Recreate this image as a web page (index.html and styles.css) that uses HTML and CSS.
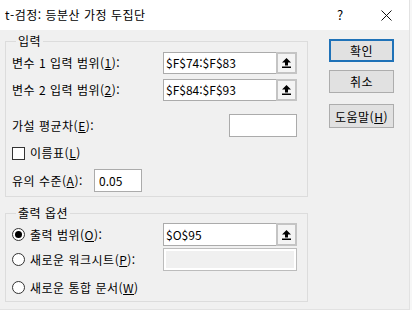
FILE: index.html
```html
<!DOCTYPE html>
<html lang="ko">
<head>
  <meta charset="utf-8" />
  <meta name="viewport" content="width=device-width, initial-scale=1" />
  <title>t-검정: 등분산 가정 두집단</title>

  <link rel="stylesheet" href="styles.css">
</head>

<body>
  <div class="dialog">
    <div class="titlebar">
      <span class="title">t-검정: 등분산 가정 두집단</span>
      <span class="tb-btn">?</span>
      <span class="tb-btn">
        <svg width="11" height="11" viewBox="0 0 11 11">
          <path d="M0.5 0.5 L10.5 10.5 M10.5 0.5 L0.5 10.5" stroke="#111" stroke-width="1" fill="none" />
        </svg>
      </span>
    </div>

    <div class="body">
      <div class="main">
        <fieldset class="group group-input">
          <legend>입력</legend>

          <div class="row row-ref">
            <span class="label">변수 1 입력 범위(<u>1</u>):</span>
            <div class="ref">
              <span class="ref-text">$F$74:$F$83</span>
              <span class="ref-btn">
                <svg width="9" height="10" viewBox="0 0 9 10">
                  <path d="M4.5 0 L9 4.5 L6 4.5 L6 7.5 L3 7.5 L3 4.5 L0 4.5 Z" fill="#000" />
                  <rect x="0" y="8.5" width="9" height="1.5" fill="#000" />
                </svg>
              </span>
            </div>
          </div>

          <div class="row row-ref row-2">
            <span class="label">변수 2 입력 범위(<u>2</u>):</span>
            <div class="ref">
              <span class="ref-text">$F$84:$F$93</span>
              <span class="ref-btn">
                <svg width="9" height="10" viewBox="0 0 9 10">
                  <path d="M4.5 0 L9 4.5 L6 4.5 L6 7.5 L3 7.5 L3 4.5 L0 4.5 Z" fill="#000" />
                  <rect x="0" y="8.5" width="9" height="1.5" fill="#000" />
                </svg>
              </span>
            </div>
          </div>

          <div class="row row-diff">
            <span class="label">가설 평균차(<u>E</u>):</span>
            <span class="textbox diff-box"></span>
          </div>

          <div class="row row-check">
            <span class="checkbox"></span>
            <span class="label">이름표(<u>L</u>)</span>
          </div>

          <div class="row row-alpha">
            <span class="label alpha-label">유의 수준(<u>A</u>):</span>
            <span class="textbox alpha-box">0.05</span>
          </div>
        </fieldset>

        <fieldset class="group group-output">
          <legend>출력 옵션</legend>

          <div class="row row-out">
            <span class="radio checked"></span>
            <span class="label">출력 범위(<u>O</u>):</span>
            <div class="ref">
              <span class="ref-text">$O$95</span>
              <span class="ref-btn">
                <svg width="9" height="10" viewBox="0 0 9 10">
                  <path d="M4.5 0 L9 4.5 L6 4.5 L6 7.5 L3 7.5 L3 4.5 L0 4.5 Z" fill="#000" />
                  <rect x="0" y="8.5" width="9" height="1.5" fill="#000" />
                </svg>
              </span>
            </div>
          </div>

          <div class="row row-out row-sheet">
            <span class="radio"></span>
            <span class="label">새로운 워크시트(<u>P</u>):</span>
            <span class="disabled-box"><span class="disabled-fill"></span></span>
          </div>

          <div class="row row-out row-book">
            <span class="radio"></span>
            <span class="label">새로운 통합 문서(<u>W</u>)</span>
          </div>
        </fieldset>
      </div>

      <div class="buttons">
        <button class="btn btn-default">확인</button>
        <button class="btn btn-cancel">취소</button>
        <button class="btn btn-help">도움말(<u>H</u>)</button>
      </div>
    </div>
  </div>

  <div class="sheet"></div>
</body>
</html>
```

FILE: styles.css
```css
body {
  margin: 0;
  padding: 0;
  width: 412px;
  height: 314px;
  overflow: hidden;
  background-color: #f7f7f7;
  font-family: "Noto Sans CJK KR", "Noto Sans", sans-serif;
  font-size: 12px;
  line-height: 14px;
  color: #000;
}

.dialog {
  width: 410px;
  height: 310px;
  background: #f0f0f0;
  border-right: 1px solid #e2e2e2;
  border-bottom: 1px solid #e2e2e2;
  box-sizing: border-box;
}

.titlebar {
  height: 30px;
  background: #fff;
  display: flex;
  align-items: center;
}

.title {
  flex: 1;
  padding-left: 5px;
  letter-spacing: 0.5px;
}

.tb-btn {
  width: 46px;
  height: 30px;
  display: flex;
  align-items: center;
  justify-content: center;
  font-size: 13px;
}

.body {
  display: flex;
  padding-left: 5px;
}

.main {
  width: 303px;
  padding-top: 4px;
}

.group {
  margin: 0;
  padding: 0 10px 0 6px;
  border: 1px solid #dcdcdc;
  min-inline-size: 0;
}

.group legend {
  margin-left: 4px;
  padding: 0 2px;
  line-height: 14px;
  letter-spacing: 0.5px;
}

.group-input {
  padding-top: 4px;
  padding-bottom: 4px;
}

.group-output {
  margin-top: 9px;
  padding-top: 3px;
  padding-bottom: 2px;
}

.row {
  display: flex;
  align-items: center;
}

.label {
  letter-spacing: 0.5px;
}

.row-ref {
  height: 22px;
  justify-content: space-between;
}

.row-2 {
  margin-top: 5px;
}

.row-diff {
  height: 23px;
  margin-top: 13px;
  justify-content: space-between;
}

.row-check {
  height: 14px;
  margin-top: 9px;
}

.row-alpha {
  height: 23px;
  margin-top: 9px;
}

.alpha-label {
  width: 82px;
}

u {
  text-decoration: underline;
  text-underline-offset: 1px;
}

.ref {
  width: 134px;
  height: 100%;
  display: flex;
  box-sizing: border-box;
}

.ref-text {
  flex: 1;
  background: #fff;
  border: 1px solid #ababab;
  border-right: none;
  padding-left: 2px;
  display: flex;
  align-items: center;
}

.ref-btn {
  width: 21px;
  background: #f4f4f4;
  border: 2px solid #c4c4c4;
  box-sizing: border-box;
  display: flex;
  align-items: center;
  justify-content: center;
}

.textbox {
  height: 23px;
  background: #fff;
  border: 1px solid #ababab;
  box-sizing: border-box;
  padding-left: 4px;
  display: flex;
  align-items: center;
}

.diff-box {
  width: 68px;
}

.alpha-box {
  width: 48px;
}

.checkbox {
  width: 13px;
  height: 13px;
  background: #fff;
  border: 1px solid #333;
  box-sizing: border-box;
  margin-right: 5px;
}

.row-out {
  height: 23px;
}

.row-out .ref {
  margin-left: auto;
}

.row-sheet {
  margin-top: 2px;
}

.row-book {
  margin-top: 5px;
}

.radio {
  width: 13px;
  height: 13px;
  border: 1px solid #333;
  border-radius: 50%;
  background: #fff;
  box-sizing: border-box;
  margin-right: 5px;
  display: flex;
  align-items: center;
  justify-content: center;
}

.radio.checked::after {
  content: "";
  width: 7px;
  height: 7px;
  border-radius: 50%;
  background: #000;
}

.disabled-box {
  margin-left: auto;
  width: 134px;
  height: 23px;
  border: 1px solid #bcbcbc;
  padding: 2px;
  background: #fff;
  box-sizing: border-box;
  display: flex;
}

.disabled-fill {
  flex: 1;
  background: #f0f0f0;
}

.buttons {
  display: flex;
  flex-direction: column;
  margin-left: 21px;
  padding-top: 9px;
}

.btn {
  width: 65px;
  height: 23px;
  padding: 0;
  background: #e1e1e1;
  border: 1px solid #adadad;
  font-family: inherit;
  font-size: 12px;
  letter-spacing: 0.5px;
  color: #000;
}

.btn-default {
  border: 2px solid #1f72b8;
}

.btn-cancel {
  margin-top: 8px;
}

.btn-help {
  margin-top: 11px;
  height: 24px;
}

.sheet {
  height: 4px;
  background: #fff;
}
```
